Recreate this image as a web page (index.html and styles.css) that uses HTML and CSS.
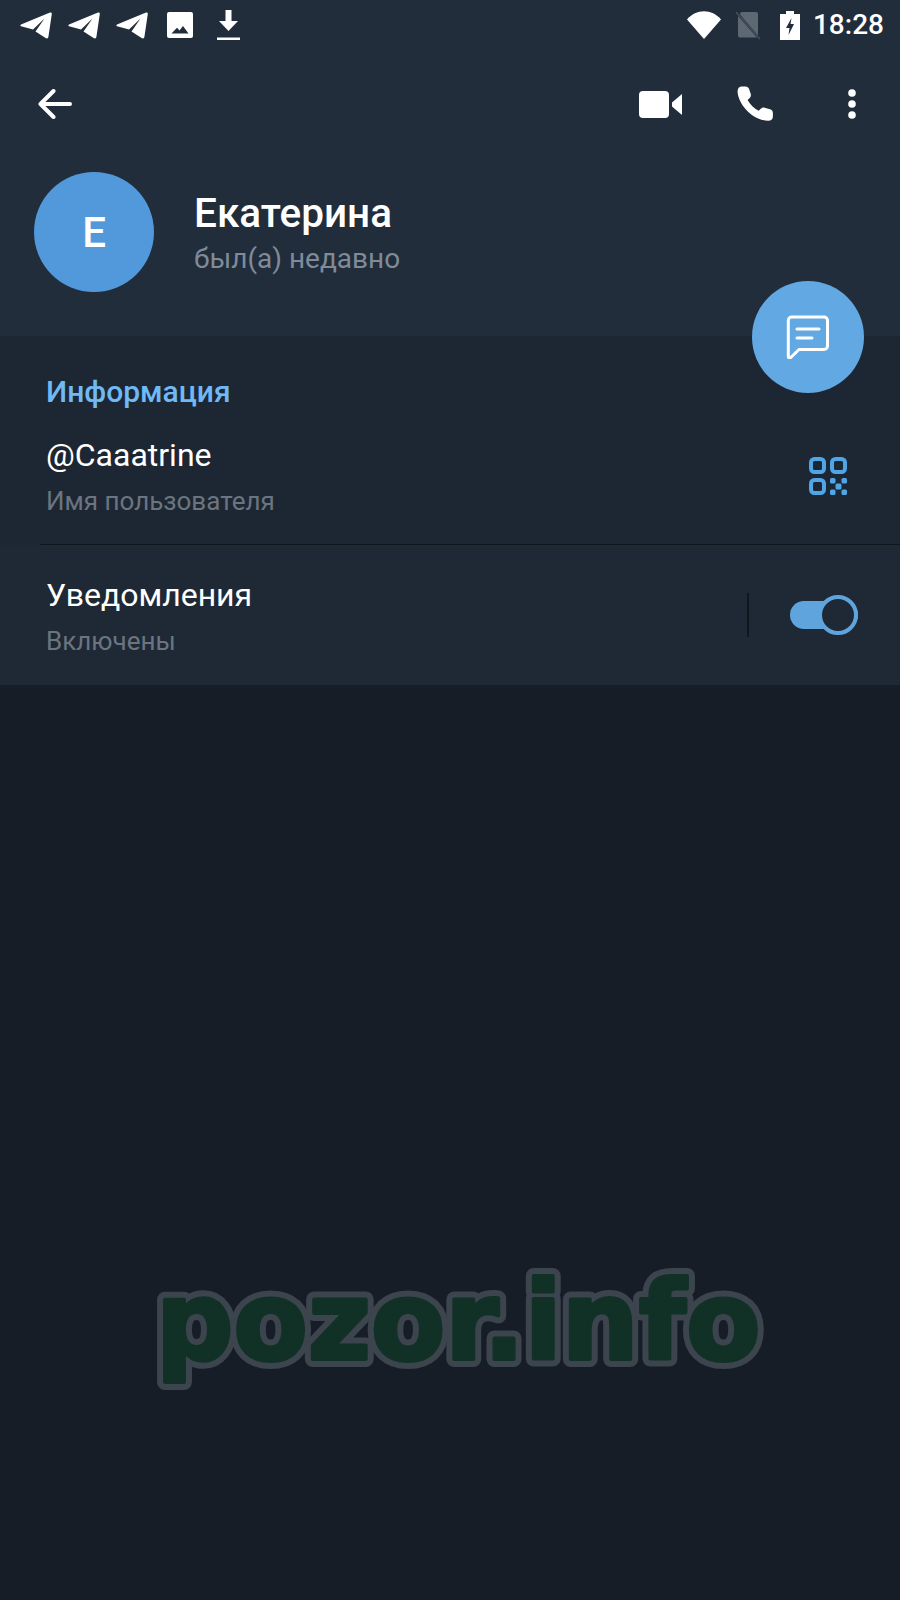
FILE: index.html
```html
<!DOCTYPE html>
<html lang="ru">
<head>
    <meta charset="UTF-8">
    <meta name="viewport" content="width=device-width, initial-scale=1.0">
    <title>Екатерина</title>
    <link rel="stylesheet" href="styles.css">
</head>
<body>
    <svg class="defs" width="0" height="0">
        <symbol id="plane" viewBox="0 0 32 27">
            <path d="M1 12.500 30 .6q2-.6 1.800 1.400L28.400 25q-.4 2-2.400 1.200L15.500 19.500 24.500 6.500 13 17.500 1 14.300q-1.200-.9 0-1.800z"/>
        </symbol>
    </svg>

    <div class="screen">
        <header class="header">
            <!-- Status bar -->
            <div class="statusbar">
                <div class="status-left">
                    <svg class="ic-plane"><use href="#plane"/></svg>
                    <svg class="ic-plane"><use href="#plane"/></svg>
                    <svg class="ic-plane"><use href="#plane"/></svg>
                    <svg class="ic-image" viewBox="0 0 26 26"><path fill-rule="evenodd" d="M2 0h22a2 2 0 0 1 2 2v22a2 2 0 0 1-2 2H2a2 2 0 0 1-2-2V2a2 2 0 0 1 2-2zm2.500 21.500h17l-5.500-7.500-3.500 4.500-2.500-2.800z"/></svg>
                    <svg class="ic-download" viewBox="0 0 23 31"><path d="M8.500 0h6v11H21L11.500 21 2 11h6.500zM0 27.500h23V30H0z"/></svg>
                </div>
                <div class="status-right">
                    <svg class="ic-wifi" viewBox="0 0 34 28"><path d="M0 8.500C9-2.500 25-2.500 34 8.500L17 28z"/></svg>
                    <svg class="ic-sim" viewBox="0 0 25 29">
                        <path fill="#5d6873" d="M6 1h14a2 2 0 0 1 2 2v21.500L4 3.500V3a2 2 0 0 1 2-2zM2 5l19 21.500H4a2 2 0 0 1-2-2z"/>
                        <path stroke="#454f5b" stroke-width="1.500" d="M0 1l24 27"/>
                    </svg>
                    <svg class="ic-battery" viewBox="0 0 20 29"><path fill-rule="evenodd" d="M6 0h8v3h6v26H0V3h6zm5.500 7L6 17h3.500l-1 7L14 13h-3.500z"/></svg>
                    <span class="clock">18:28</span>
                </div>
            </div>

            <!-- Toolbar -->
            <div class="toolbar">
                <svg class="ic-back" viewBox="0 0 34 30"><path d="M32 15H3M15.500 2 2.500 15l13 13"/></svg>
                <div class="toolbar-actions">
                    <svg class="ic-video" viewBox="0 0 43 27"><rect width="30" height="27" rx="4"/><path d="M33 11.500 43 3v21l-10-8.500z"/></svg>
                    <svg class="ic-phone" viewBox="0 0 37 36"><path d="M9 1.500c1.500 0 3 1 3.500 2.500l1.500 4.500c.4 1.500 0 2.600-1 3.700l-2 2c2.500 4.500 6 8 10.500 10.300l2-2c1-1 2.400-1.300 3.700-1l5 1.500c1.800.5 2.800 1.800 2.800 3.500v3.500c0 2.500-2 3.900-4.300 3.900C16 33.500 2.500 19 1.500 6.500 1.400 3.500 3 1.500 5.500 1.500z"/></svg>
                    <svg class="ic-dots" viewBox="0 0 8 30"><circle cx="4" cy="4" r="3.800"/><circle cx="4" cy="15" r="3.800"/><circle cx="4" cy="26" r="3.800"/></svg>
                </div>
            </div>

            <!-- Profile -->
            <div class="profile">
                <div class="avatar">Е</div>
                <div class="profile-text">
                    <div class="profile-name">Екатерина</div>
                    <div class="profile-status">был(а) недавно</div>
                </div>
            </div>

            <div class="fab">
                <svg class="ic-message" viewBox="0 0 44 44"><path d="M6 2h32a3.500 3.500 0 0 1 3.500 3.500V31a3.500 3.500 0 0 1-3.500 3.500H13L4.500 42.800c-1 .8-2.200.2-2.200-1V5.500A3.500 3.500 0 0 1 6 2zM11 14h22M11 23h15"/></svg>
            </div>
        </header>

        <section class="info">
            <div class="info-title">Информация</div>
            <div class="row-user">
                <div>
                    <div class="row-main">@Caaatrine</div>
                    <div class="row-sub">Имя пользователя</div>
                </div>
                <svg class="ic-qr" viewBox="0 0 38 38">
                    <rect x="2" y="2" width="13" height="13" rx="3.500"/>
                    <rect x="23" y="2" width="13" height="13" rx="3.500"/>
                    <rect x="2" y="23" width="13" height="13" rx="3.500"/>
                    <g class="qr-dots">
                        <rect x="21" y="21" width="5.500" height="5.500" rx="1.500"/>
                        <rect x="32.500" y="21" width="5.500" height="5.500" rx="1.500"/>
                        <rect x="26.500" y="26.500" width="6" height="6" rx="1.500"/>
                        <rect x="21" y="32.500" width="5.500" height="5.500" rx="1.500"/>
                        <rect x="32.500" y="32.500" width="5.500" height="5.500" rx="1.500"/>
                    </g>
                </svg>
            </div>
            <div class="divider"></div>
        </section>

        <section class="notify">
            <div>
                <div class="row-main">Уведомления</div>
                <div class="row-sub">Включены</div>
            </div>
            <div class="notify-controls">
                <div class="notify-sep"></div>
                <div class="toggle"><div class="toggle-knob"></div></div>
            </div>
        </section>

        <!-- Watermark: the same text twice, wide outline behind, fattened fill in front -->
        <svg class="watermark" viewBox="0 0 640 150">
            <text class="wm-outline" x="16" y="110">pozor.info</text>
            <text class="wm-fill" x="16" y="110">pozor.info</text>
        </svg>
    </div>
</body>
</html>
```

FILE: styles.css
```css
* {
    box-sizing: border-box;
}
html, body {
    margin: 0;
    padding: 0;
}
body {
    font-family: Roboto, "Noto Sans", sans-serif;
    background: #161d27;
    color: #fff;
}
.defs {
    display: block;
    height: 0;
}
.screen {
    width: 900px;
    height: 1600px;
    overflow: hidden;
}
svg {
    display: block;
    fill: #fff;
    flex: none;
}

/* header */
.header {
    position: relative;
    height: 336px;
    background: #212d3b;
}
.statusbar {
    display: flex;
    justify-content: space-between;
    align-items: center;
    height: 50px;
    padding: 0 16px 0 20px;
}
.status-left, .status-right {
    display: flex;
    align-items: center;
}
.ic-plane {
    width: 32px;
    height: 27px;
    margin-right: 16px;
}
.ic-plane + .ic-image {
    margin-left: 3px;
}
.ic-image {
    width: 26px;
    height: 26px;
    margin-right: 24px;
}
.ic-download {
    width: 23px;
    height: 31px;
}
.ic-wifi {
    width: 34px;
    height: 28px;
    margin-right: 15px;
}
.ic-sim {
    width: 25px;
    height: 29px;
    margin-right: 19px;
}
.ic-battery {
    width: 20px;
    height: 29px;
    margin-right: 13px;
}
.clock {
    font-size: 28px;
    font-weight: 500;
    line-height: 30px;
}
.toolbar {
    display: flex;
    justify-content: space-between;
    align-items: center;
    height: 108px;
    padding: 0 44px 0 38px;
}
.toolbar-actions {
    display: flex;
    align-items: center;
}
.ic-back {
    width: 34px;
    height: 30px;
    fill: none;
    stroke: #fff;
    stroke-width: 4;
    stroke-linecap: round;
    stroke-linejoin: round;
}
.ic-video {
    width: 43px;
    height: 27px;
    margin-right: 54px;
}
.ic-phone {
    width: 39px;
    height: 38px;
    margin-right: 73px;
}
.ic-dots {
    width: 8px;
    height: 30px;
}
.profile {
    display: flex;
    align-items: center;
    padding: 14px 0 0 34px;
}
.avatar {
    display: flex;
    align-items: center;
    justify-content: center;
    width: 120px;
    height: 120px;
    border-radius: 50%;
    background: #5299dc;
    font-size: 42px;
    font-weight: 500;
}
.profile-text {
    margin-left: 40px;
    padding-top: 2px;
}
.profile-name {
    font-size: 40.500px;
    font-weight: 500;
    line-height: 44px;
}
.profile-status {
    margin-top: 7px;
    font-size: 28px;
    line-height: 34px;
    color: #7f8b99;
}
.fab {
    position: absolute;
    left: 752px;
    top: 281px;
    display: flex;
    align-items: center;
    justify-content: center;
    width: 112px;
    height: 112px;
    border-radius: 50%;
    background: #62a8e3;
}
.ic-message {
    width: 44px;
    height: 44px;
    fill: none;
    stroke: #fff;
    stroke-width: 3;
    stroke-linecap: round;
    stroke-linejoin: round;
}

/* info */
.info {
    display: flex;
    flex-direction: column;
    height: 209px;
    padding-top: 39px;
    background: #1d2733;
}
.info-title {
    padding-left: 46px;
    font-size: 30px;
    font-weight: 500;
    line-height: 34px;
    color: #6fb9f5;
}
.row-user {
    display: flex;
    justify-content: space-between;
    align-items: center;
    padding: 0 53px 0 46px;
    margin-top: 26px;
}
.divider {
    height: 1px;
    margin: auto 0 0 40px;
    background: #0f151c;
}
.row-main {
    font-size: 32px;
    line-height: 40px;
}
.row-sub {
    margin-top: 11px;
    font-size: 26px;
    line-height: 30px;
    color: #6b7580;
}
.ic-qr {
    width: 38px;
    height: 38px;
    fill: none;
    stroke: #4fa5e5;
    stroke-width: 4;
}
.qr-dots {
    fill: #4fa5e5;
    stroke: none;
}

/* notifications */
.notify {
    display: flex;
    justify-content: space-between;
    align-items: center;
    height: 140px;
    padding: 0 42px 0 46px;
    background: #1f2935;
}
.notify-controls {
    display: flex;
    align-items: center;
}
.notify-sep {
    width: 2px;
    height: 44px;
    background: #10161e;
    margin-right: 41px;
}
.toggle {
    position: relative;
    width: 68px;
    height: 28px;
    border-radius: 14px;
    background: #5fa4dd;
}
.toggle-knob {
    position: absolute;
    right: 0;
    top: -6px;
    width: 40px;
    height: 40px;
    border-radius: 50%;
    background: #1f2935;
    border: 4px solid #5fa4dd;
}

/* watermark */
.watermark {
    width: 640px;
    height: 150px;
    margin: 564px 0 0 140px;
    font-family: "DejaVu Sans", sans-serif;
    font-size: 108px;
    font-weight: 700;
    letter-spacing: 0.200px;
    stroke-linejoin: round;
}
.wm-outline {
    fill: #3c444d;
    stroke: #3c444d;
    stroke-width: 16px;
}
.wm-fill {
    fill: #113026;
    stroke: #113026;
    stroke-width: 4px;
}
```
